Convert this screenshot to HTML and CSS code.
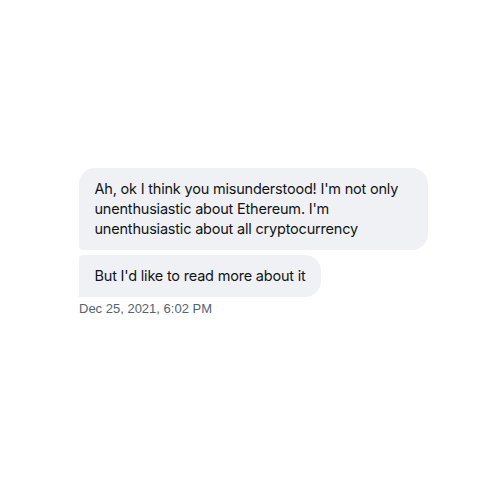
FILE: index.html
```html
<!DOCTYPE html>
<html>
<head>
<meta charset="utf-8">
<link rel="stylesheet" href="styles.css">
</head>
<body>
<div class="thread">
  <div class="group">
    <div class="bubble first">Ah, ok I think you misunderstood! I'm not only unenthusiastic about Ethereum. I'm unenthusiastic about all cryptocurrency</div>
    <div class="bubble last">But I'd like to read more about it</div>
  </div>
  <div class="time">Dec 25, 2021, 6:02 PM</div>
</div>
</body>
</html>
```
FILE: styles.css
```css
html, body {
  margin: 0;
  padding: 0;
  background: #ffffff;
}
.thread {
  padding: 168px 0 0 79px;
  display: flex;
  flex-direction: column;
  align-items: flex-start;
}
.group {
  display: flex;
  flex-direction: column;
  align-items: flex-start;
  gap: 5px;
}
.bubble {
  max-width: 318px;
  padding: 11px 15.5px;
  background: #eff1f4;
  color: #0f1419;
  font-family: Inter, "Noto Sans", sans-serif;
  font-size: 14.5px;
  letter-spacing: -0.2px;
  line-height: 20px;
  border-radius: 16px;
}
.bubble.first {
  width: 318px;
  border-bottom-left-radius: 4px;
}
.bubble.last {
  border-top-left-radius: 4px;
  border-bottom-left-radius: 0;
}
.time {
  margin-top: 4px;
  color: #536471;
  font-family: "Liberation Sans", Arial, sans-serif;
  font-size: 13px;
  line-height: 16px;
}
```
